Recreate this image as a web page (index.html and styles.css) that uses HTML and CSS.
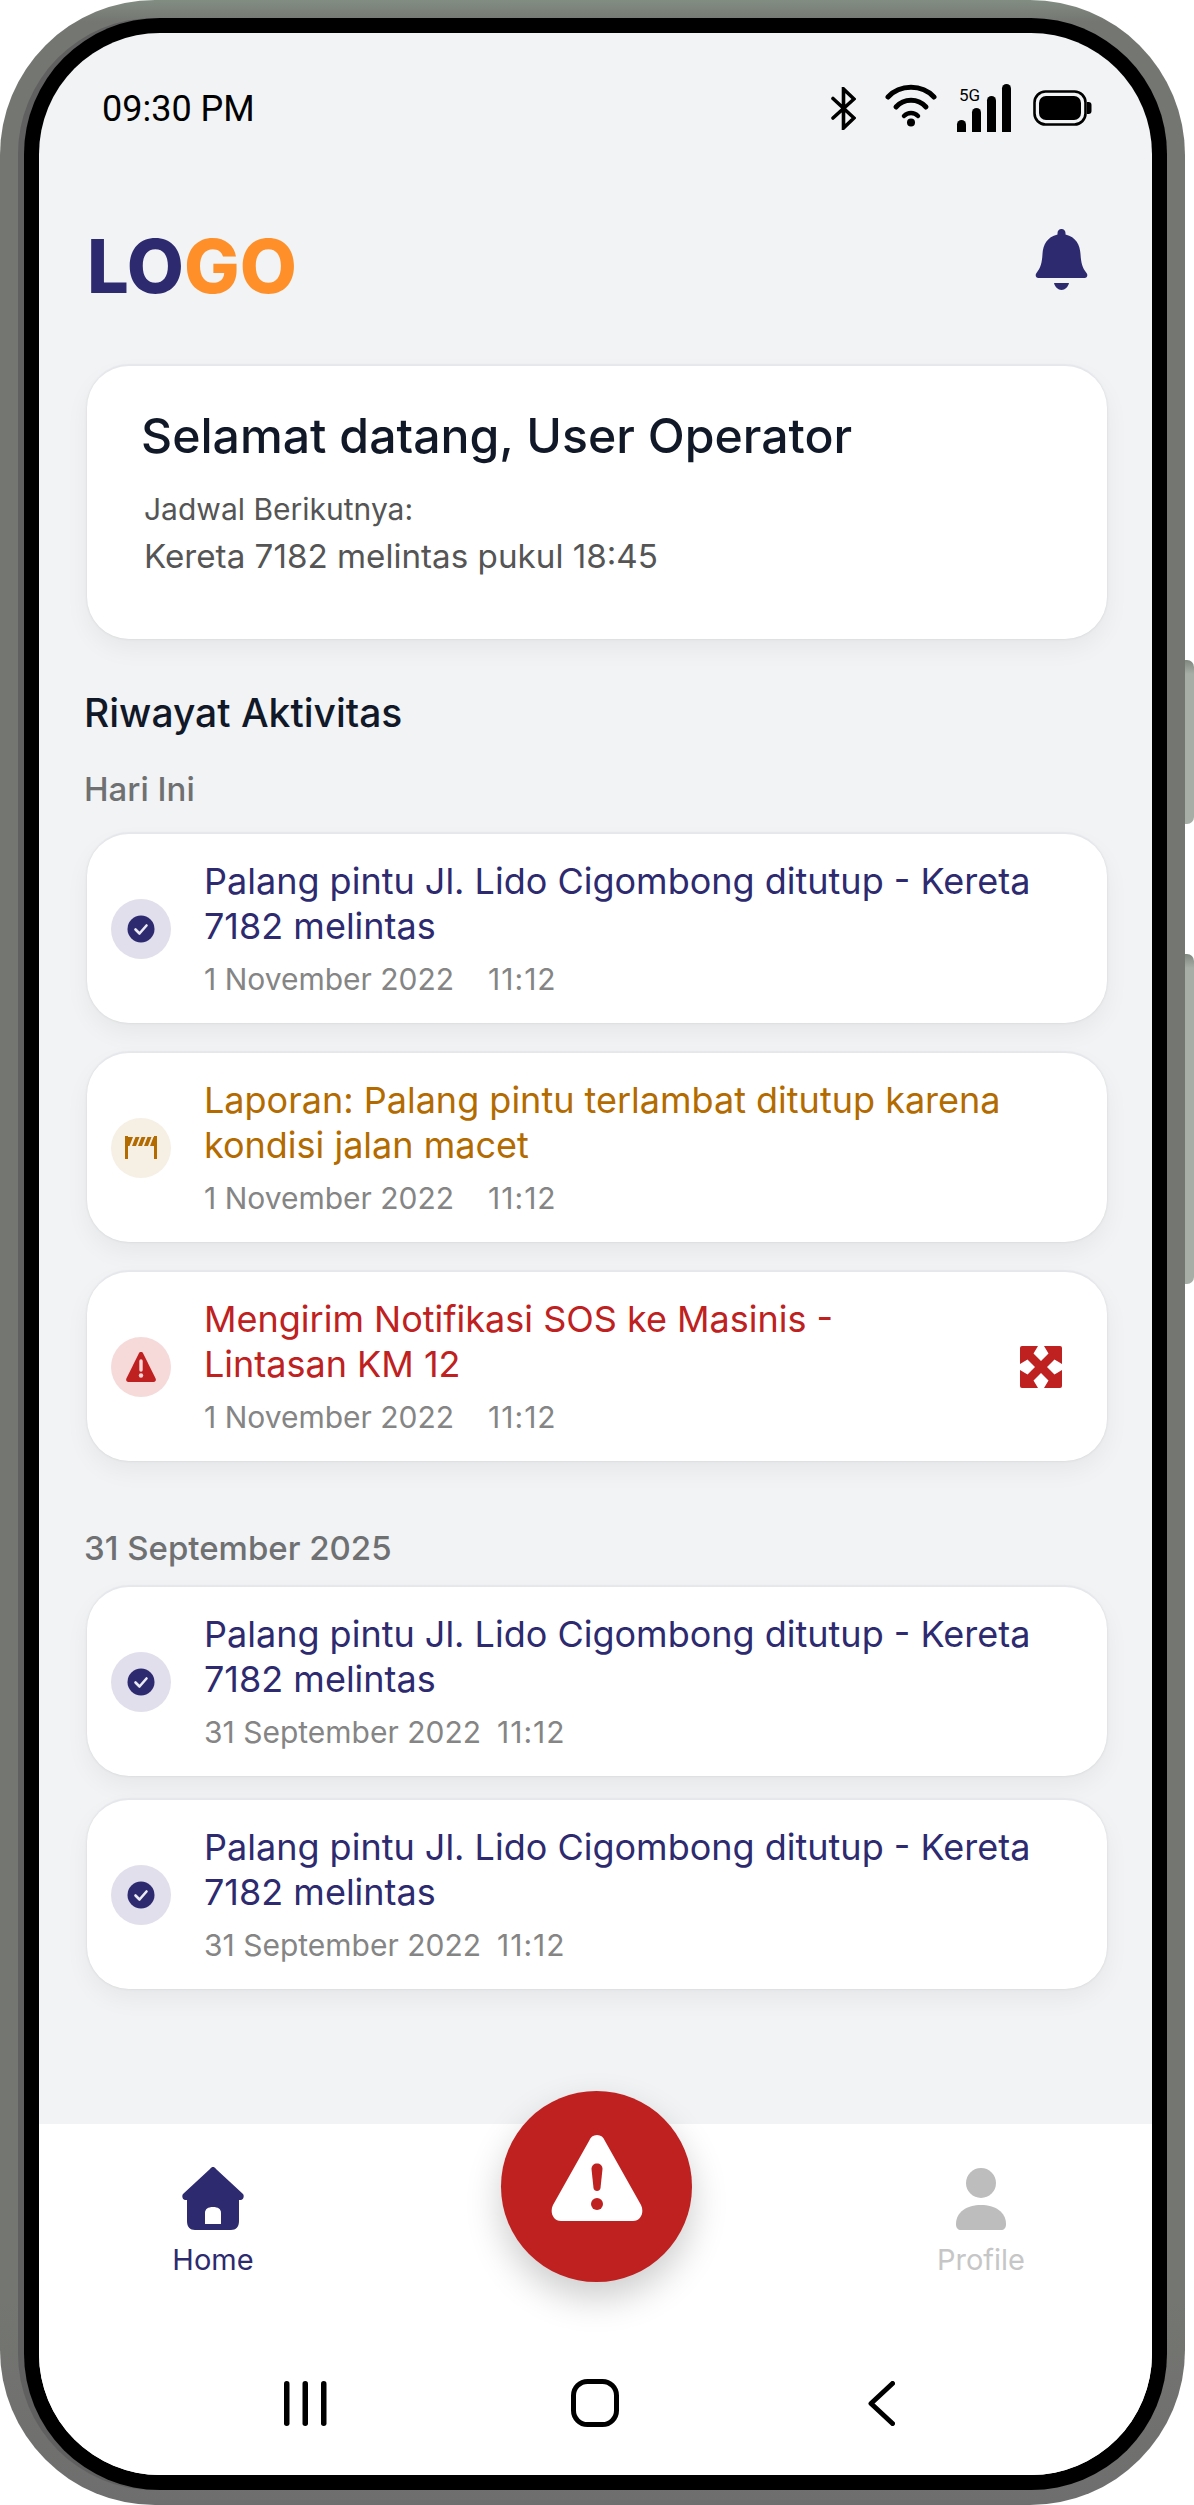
FILE: index.html
```html
<!DOCTYPE html>
<html lang="en">
<head>
  <meta charset="UTF-8">
  <meta name="viewport" content="width=device-width, initial-scale=1.0">
  <title>Beranda Operator</title>
  <link rel="stylesheet" href="styles.css">
</head>
<body>
  <div class="phone">
    <span class="side-btn side-btn-top"></span>
    <span class="side-btn side-btn-bottom"></span>

    <div class="bezel">
      <div class="screen">
        <div class="status-bar">
          <span class="time">09:30 PM</span>
          <div class="status-icons">
            <svg class="icon-bt" width="25" height="43" viewBox="0 0 25 43" fill="none" stroke="#000" stroke-width="3.6" stroke-linecap="round" stroke-linejoin="miter"><path d="M2 11.5 L23 31 L12.5 41 V2 L23 12 L2 31"/></svg>
            <svg class="icon-wifi" width="52" height="43" viewBox="0 0 52 43" fill="none" stroke="#000" stroke-width="5" stroke-linecap="round"><path d="M3 13 C15 0 37 0 49 13"/><path d="M11 23 C19 14 33 14 41 23"/><path d="M19 32 C23 28 29 28 33 32" stroke-width="4.5"/><circle cx="26" cy="38.5" r="4" fill="#000" stroke="none"/></svg>
            <div class="signal">
              <span class="signal-label">5G</span>
              <span class="bar bar-1"></span>
              <span class="bar bar-2"></span>
              <span class="bar bar-3"></span>
              <span class="bar bar-4"></span>
            </div>
            <svg class="icon-battery" width="59" height="36" viewBox="0 0 59 36"><rect x="1.5" y="1.5" width="51" height="33" rx="11" fill="none" stroke="#000" stroke-width="2.6"/><rect x="6" y="6" width="42" height="24" rx="7" fill="#000"/><path d="M54 12 h1.5 c2 0 3 1 3 3 v6 c0 2-1 3-3 3 H54 Z" fill="#000"/></svg>
          </div>
        </div>

        <header class="app-header">
          <div class="logo">LO<span class="logo-accent">GO</span></div>
          <svg class="bell" width="53" height="61" viewBox="0 0 53 61" fill="#2d2a70"><path d="M26.5 0 c-2.5 0-4 1.8-4 4 v1.5 C12 8 8 16 7.5 25 c-.5 9-2 14-6 19 c-1.6 2-.8 5 2 5 h46 c2.800 0 3.600-3 2-5 c-4-5-5.500-10-6-19 C45 16 41 8 30.500 5.500 V4 c0-2.200-1.500-4-4-4z"/><path d="M19 54 h15 c-1 4-4 7-7.500 7 s-6.500-3-7.500-7z"/></svg>
        </header>

        <main class="content">
          <section class="card welcome">
            <h1>Selamat datang, User Operator</h1>
            <p class="next-label">Jadwal Berikutnya:</p>
            <p class="next-text">Kereta 7182 melintas pukul 18:45</p>
          </section>

          <h2 class="section-title">Riwayat Aktivitas</h2>

          <h3 class="day-label">Hari Ini</h3>
          <div class="activity-list">
            <div class="card activity activity-done">
              <span class="activity-icon"><svg width="28" height="28" viewBox="0 0 28 28"><circle cx="14" cy="14" r="13.500" fill="#2d2a70"/><path d="M8.500 14.500 l4 4 l7-8" fill="none" stroke="#fff" stroke-opacity=".9" stroke-width="2.600" stroke-linecap="round" stroke-linejoin="round"/></svg></span>
              <div class="activity-body">
                <p class="activity-title">Palang pintu Jl. Lido Cigombong ditutup - Kereta 7182 melintas</p>
                <p class="activity-meta"><span>1 November 2022</span><span class="activity-time">11:12</span></p>
              </div>
            </div>

            <div class="card activity activity-report">
              <span class="activity-icon"><svg width="32" height="23" viewBox="0 0 32 23" fill="#b36b00"><rect width="3" height="23"/><rect x="29" width="3" height="23"/><path d="M3 1 h5 l-3.500 9 H3z M10.500 1 h4 l-3.500 9 H7z M16.500 1 h4 l-3.500 9 h-4z M22.500 1 h4 l-3.500 9 h-4z M28.500 1 h.5 v9 h-4z"/></svg></span>
              <div class="activity-body">
                <p class="activity-title">Laporan: Palang pintu terlambat ditutup karena kondisi jalan macet</p>
                <p class="activity-meta"><span>1 November 2022</span><span class="activity-time">11:12</span></p>
              </div>
            </div>

            <div class="card activity activity-sos">
              <span class="activity-icon"><svg width="30" height="30" viewBox="0 0 30 30"><path d="M15 0 c-1 0-1.700.5-2.200 1.400 L.4 26.500 C-.4 28.200.5 30 2.400 30 h25.200 c1.900 0 2.800-1.800 2-3.500 L17.200 1.400 C16.700.5 16 0 15 0z" fill="#bf2020"/><path d="M15 9 v9" stroke="#f6dada" stroke-width="3.400" stroke-linecap="round"/><circle cx="15" cy="23.500" r="2.200" fill="#f6dada"/></svg></span>
              <div class="activity-body activity-body-short">
                <p class="activity-title">Mengirim Notifikasi SOS ke Masinis - Lintasan KM 12</p>
                <p class="activity-meta"><span>1 November 2022</span><span class="activity-time">11:12</span></p>
              </div>
              <svg class="expand-icon" width="42" height="42" viewBox="0 0 42 42"><rect width="42" height="42" rx="2" fill="#bf2020"/><path d="M18 0 h6 l4.500 7.500 L21 15 L13.500 7.500z M18 42 h6 l4.500-7.500 L21 27 L13.500 34.500z M0 18 v6 l7.500 4.500 L15 21 L7.500 13.500z M42 18 v6 l-7.500 4.500 L27 21 L34.500 13.500z" fill="#fff"/></svg>
            </div>
          </div>

          <h3 class="day-label day-label-past">31 September 2025</h3>
          <div class="activity-list activity-list-tight">
            <div class="card activity activity-done">
              <span class="activity-icon"><svg width="28" height="28" viewBox="0 0 28 28"><circle cx="14" cy="14" r="13.500" fill="#2d2a70"/><path d="M8.500 14.500 l4 4 l7-8" fill="none" stroke="#fff" stroke-opacity=".9" stroke-width="2.600" stroke-linecap="round" stroke-linejoin="round"/></svg></span>
              <div class="activity-body">
                <p class="activity-title">Palang pintu Jl. Lido Cigombong ditutup - Kereta 7182 melintas</p>
                <p class="activity-meta activity-meta-tight"><span>31 September 2022</span><span class="activity-time">11:12</span></p>
              </div>
            </div>

            <div class="card activity activity-done">
              <span class="activity-icon"><svg width="28" height="28" viewBox="0 0 28 28"><circle cx="14" cy="14" r="13.500" fill="#2d2a70"/><path d="M8.500 14.500 l4 4 l7-8" fill="none" stroke="#fff" stroke-opacity=".9" stroke-width="2.600" stroke-linecap="round" stroke-linejoin="round"/></svg></span>
              <div class="activity-body">
                <p class="activity-title">Palang pintu Jl. Lido Cigombong ditutup - Kereta 7182 melintas</p>
                <p class="activity-meta activity-meta-tight"><span>31 September 2022</span><span class="activity-time">11:12</span></p>
              </div>
            </div>
          </div>
        </main>

        <div class="bottom">
          <button class="sos-btn" aria-label="SOS">
            <svg width="92" height="86" viewBox="0 0 92 86"><path d="M46 0 c-4 0-6.500 2-8 6 L2 70 c-3.500 7 0 16 8 16 h72 c8 0 11.500-9 8-16 L54 6 C52.500 2 50 0 46 0z" fill="#fff"/><path d="M40.500 34 c0-3.500 2.500-5.500 5.500-5.500 s5.500 2 5.500 5.500 L49.500 53 c-.3 2-1.700 3-3.500 3 s-3.200-1-3.500-3z" fill="#bf2020"/><circle cx="46" cy="69" r="6" fill="#bf2020"/></svg>
          </button>

          <nav class="tabs">
            <a class="tab tab-active" href="#">
              <svg width="62" height="63" viewBox="0 0 62 63"><path d="M31 0 c-1 0-2 .5-3 2 L1 27 c-1.500 2-.5 6 2 6 h2 v21 c0 6 3 9 8 9 h36 c5 0 8-3 8-9 V33 h2 c2.500 0 3.500-4 2-6 L34 2 c-1-1.500-2-2-3-2z" fill="#2d2a70"/><path d="M23 57 V46 c0-4 3-6 8-6 s8 2 8 6 v11z" fill="#fff"/></svg>
              <span>Home</span>
            </a>
            <a class="tab" href="#">
              <svg width="62" height="63" viewBox="0 0 62 63" fill="#bdbdbd"><circle cx="31" cy="16" r="15"/><path d="M6 57 C6 45 17 38 31 38 s25 7 25 19 c0 4-2 6-5 6 H11 c-3 0-5-2-5-6z"/></svg>
              <span>Profile</span>
            </a>
          </nav>

          <div class="softkeys">
            <svg width="45" height="45" viewBox="0 0 45 45" fill="#000"><rect x="0" width="5.500" height="45" rx="2.700"/><rect x="18.500" width="5.500" height="45" rx="2.700"/><rect x="37" width="5.500" height="45" rx="2.700"/></svg>
            <svg width="48" height="48" viewBox="0 0 48 48"><rect x="2.500" y="2.500" width="43" height="43" rx="14" fill="none" stroke="#000" stroke-width="5"/></svg>
            <svg width="27" height="45" viewBox="0 0 27 45"><path d="M24.500 2.500 L3 22.500 L24.500 42.500" fill="none" stroke="#000" stroke-width="5" stroke-linecap="round" stroke-linejoin="round"/></svg>
          </div>
        </div>
      </div>
    </div>
  </div>
</body>
</html>
```

FILE: styles.css
```css
* {
  margin: 0;
  padding: 0;
  box-sizing: border-box;
}

body {
  background: #fff;
  font-family: 'Inter', sans-serif;
  width: 1194px;
  height: 2505px;
  overflow: hidden;
}

/* device frame */
.phone {
  position: relative;
  width: 1185px;
  height: 2505px;
  padding: 18px 18px 15px 24px;
  border-radius: 155px;
  background: linear-gradient(#828d82 0, #747671 22px, #747671 2300px, #6e6e6e 100%);
}

.side-btn {
  position: absolute;
  left: 100%;
  width: 9px;
  border-radius: 0 7px 7px 0;
  background: linear-gradient(#7f877f 0, #a6aea6 14px);
}

.side-btn-top {
  top: 660px;
  height: 164px;
}

.side-btn-bottom {
  top: 954px;
  height: 330px;
}

.bezel {
  height: 100%;
  padding: 15px;
  border-radius: 136px;
  background: #000;
  box-shadow: -6px 0 0 #606060;
}

.screen {
  position: relative;
  display: flex;
  flex-direction: column;
  height: 100%;
  border-radius: 121px;
  background: #f1f3f5;
  overflow: hidden;
}

/* status bar */
.status-bar {
  display: flex;
  justify-content: space-between;
  align-items: center;
  flex-shrink: 0;
  height: 150px;
  padding: 0 60px 0 63px;
}

.time {
  margin-top: 2px;
  font-family: 'Roboto', sans-serif;
  font-size: 36px;
  color: #000;
}

.status-icons {
  display: flex;
  align-items: flex-start;
  height: 48px;
}

.icon-bt {
  margin-top: 3px;
  margin-right: 29px;
}

.icon-wifi {
  margin-right: 20px;
}

.icon-battery {
  margin-top: 6px;
  margin-left: 22px;
}

.signal {
  position: relative;
  display: flex;
  align-items: flex-end;
  gap: 6px;
  height: 48px;
}

.signal-label {
  position: absolute;
  left: 2px;
  top: 1px;
  font-family: 'Roboto', sans-serif;
  font-size: 17px;
  line-height: 20px;
  color: #000;
}

.bar {
  width: 9px;
  background: #000;
  border-radius: 5px 5px 0 0;
}

.bar-1 { height: 12px; }
.bar-2 { height: 24px; }
.bar-3 { height: 36px; }
.bar-4 { height: 48px; }

/* header */
.app-header {
  display: flex;
  justify-content: space-between;
  align-items: center;
  flex-shrink: 0;
  height: 166px;
  margin-bottom: 17px;
  padding: 0 64px 0 48px;
}

.logo {
  font-size: 74px;
  font-weight: 800;
  line-height: 90px;
  color: #2d2a70;
}

.logo-accent {
  color: #ff9029;
}

.bell {
  margin-bottom: 14px;
}

/* content */
.content {
  flex: 1;
  padding: 0 45px 0 48px;
}

.card {
  background: #fff;
  border-radius: 42px;
  box-shadow: 0 -3px 1px -1px #e6e7eb, 0 0 3px rgba(0, 0, 0, 0.1), 0 10px 24px rgba(0, 0, 0, 0.05);
}

.welcome {
  height: 273px;
  padding: 41px 53px 0 54px;
}

.welcome h1 {
  font-size: 48.2px;
  font-weight: 500;
  line-height: 58px;
  color: #111827;
}

.next-label {
  margin-top: 24px;
  margin-left: 3px;
  font-size: 30px;
  line-height: 40px;
  color: #555;
}

.next-text {
  margin-top: 5px;
  margin-left: 3px;
  font-size: 33.2px;
  line-height: 44px;
  color: #555;
}

.section-title {
  margin-top: 51px;
  margin-left: -3px;
  font-size: 39px;
  font-weight: 500;
  line-height: 46px;
  color: #111827;
}

.day-label {
  margin-top: 33px;
  margin-bottom: 25px;
  margin-left: -3px;
  font-size: 33px;
  font-weight: 500;
  line-height: 40px;
  color: #6f7072;
}

.day-label-past {
  margin-top: 67px;
  margin-bottom: 19px;
}

.activity-list {
  display: flex;
  flex-direction: column;
  gap: 30px;
}

.activity-list-tight {
  gap: 24px;
}

.activity {
  display: flex;
  align-items: center;
  height: 189px;
  padding: 0 42px 0 24px;
}

.activity-icon {
  display: flex;
  justify-content: center;
  align-items: center;
  flex-shrink: 0;
  width: 60px;
  height: 60px;
  margin-right: 33px;
  border-radius: 50%;
}

.activity-done .activity-icon { background: #e0dfeb; }
.activity-report .activity-icon { background: #f6efe4; }
.activity-sos .activity-icon { background: #f6dada; }

.activity-done .activity-title { color: #2d2a70; }
.activity-report .activity-title { color: #b36b00; }
.activity-sos .activity-title { color: #bf2020; }

.activity-body {
  flex: 1;
}

.activity-body-short .activity-title {
  max-width: 720px;
}

.activity-title {
  font-size: 36px;
  line-height: 45px;
}

.activity-meta {
  display: flex;
  gap: 34px;
  margin-top: 10px;
  font-size: 30px;
  line-height: 40px;
  color: #858585;
}

.activity-meta-tight {
  gap: 16px;
}

.activity-time {
  letter-spacing: 1px;
}

.expand-icon {
  flex-shrink: 0;
  margin-left: 10px;
  margin-right: 3px;
}

/* bottom nav */
.bottom {
  position: relative;
  flex-shrink: 0;
  height: 351px;
  background: #fff;
}

.sos-btn {
  position: absolute;
  left: 462px;
  top: -33px;
  display: flex;
  justify-content: center;
  align-items: flex-start;
  width: 191px;
  height: 191px;
  padding-top: 44px;
  border: none;
  border-radius: 50%;
  background: #bf2020;
  box-shadow: 0 16px 36px rgba(0, 0, 0, 0.2);
}

.tabs {
  display: flex;
  justify-content: space-between;
  padding: 43px 111px 0 114px;
}

.tab {
  display: flex;
  flex-direction: column;
  align-items: center;
  width: 120px;
  font-size: 29px;
  line-height: 36px;
  text-decoration: none;
  color: #c6c6c6;
}

.tab svg {
  margin-bottom: 12px;
}

.tab-active {
  color: #2d2a70;
}

.softkeys {
  display: grid;
  grid-template-columns: 290px 287px 287px;
  justify-items: center;
  align-items: center;
  margin-top: 101px;
  padding-left: 122px;
}
```
